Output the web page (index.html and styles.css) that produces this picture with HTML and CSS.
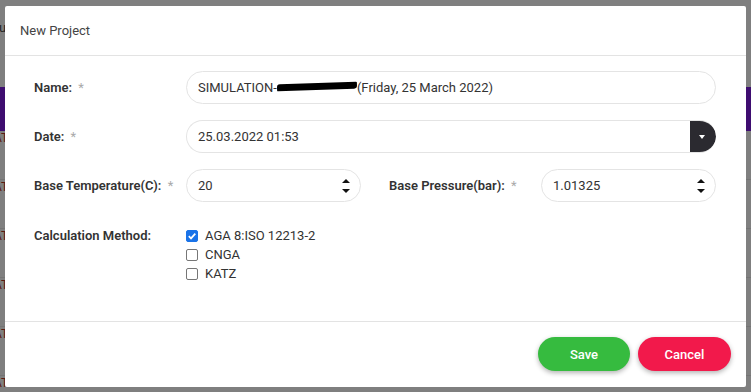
FILE: index.html
```
<!DOCTYPE html>
<html>
<head>
<meta charset="utf-8">
<title>New Project</title>
<link rel="stylesheet" href="styles.css">
</head>
<body>

<!-- page behind the dialog -->
<div class="page">
	<div class="page-top"><span>u</span></div>
	<div class="page-band"></div>
	<div class="page-row"><span>AT</span></div>
	<div class="page-row"><span>AT</span></div>
	<div class="page-row"><span>AT</span></div>
	<div class="page-row"><span>AT</span></div>
	<div class="page-row"><span>AT</span></div>
	<div class="page-row"><span>AT</span></div>
</div>

<!-- dialog -->
<div class="modal">
	<div class="modal-head">New Project</div>

	<div class="modal-body">
		<div class="row">
			<label class="lbl">Name: <i>*</i></label>
			<div class="field wide">
				<span>SIMULATION-<b class="redact"></b>(Friday, 25 March 2022)</span>
			</div>
		</div>

		<div class="row">
			<label class="lbl">Date: <i>*</i></label>
			<div class="field wide date">
				<span>25.03.2022 01:53</span>
				<div class="date-btn"><em></em></div>
			</div>
		</div>

		<div class="row">
			<label class="lbl">Base Temperature(C): <i>*</i></label>
			<div class="field num">
				<span>20</span>
				<div class="spin"><em class="up"></em><em class="down"></em></div>
			</div>
			<label class="lbl lbl2">Base Pressure(bar): <i>*</i></label>
			<div class="field num">
				<span>1.01325</span>
				<div class="spin"><em class="up"></em><em class="down"></em></div>
			</div>
		</div>

		<div class="row top">
			<label class="lbl">Calculation Method:</label>
			<div class="checks">
				<div class="check"><span class="box on"><svg width="10" height="10" viewBox="0 0 10 10"><path d="M1.8 5.2 L4 7.4 L8.3 2.6" fill="none" stroke="#fff" stroke-width="1.7"/></svg></span>AGA 8:ISO 12213-2</div>
				<div class="check"><span class="box"></span>CNGA</div>
				<div class="check"><span class="box"></span>KATZ</div>
			</div>
		</div>
	</div>

	<div class="modal-foot">
		<button class="btn save">Save</button>
		<button class="btn cancel">Cancel</button>
	</div>
</div>

</body>
</html>
```

FILE: styles.css
```
* {
	box-sizing: border-box;
}
html, body {
	height: 392px;
	overflow: hidden;
}
body {
	margin: 0;
	width: 751px;
	background: #7f7f7f;
	font-family: Roboto, "Liberation Sans", sans-serif;
	font-size: 13px;
	color: #333;
	position: relative;
}

/* dimmed page */
.page {
	height: 392px;
	overflow: hidden;
}
.page-top {
	height: 87px;
	padding: 20px 0 0 0;
	color: #222;
	font-size: 13px;
}
.page-top span { margin-left: -1px; }
.page-band {
	height: 44px;
	background: #3e0d70;
}
.page-row {
	height: 49px;
	border-bottom: 1px solid #747474;
	padding-top: 0;
	color: #5a1a10;
	font-size: 12px;
}
.page-row span { margin-left: -6px; }

/* dialog */
.modal {
	position: absolute;
	left: 5px;
	top: 6px;
	width: 741px;
	height: 381px;
	background: #fff;
	border-radius: 2px;
	display: flex;
	flex-direction: column;
}
.modal-head {
	height: 50px;
	padding: 17px 15px 0;
	border-bottom: 1px solid #e3e3e3;
	color: #444;
	font-size: 13px;
}
.modal-body {
	flex: 1;
	padding: 15px 30px 0 29px;
	display: flex;
	flex-direction: column;
	gap: 16px;
}
.row {
	display: flex;
	align-items: center;
}
.row.top {
	align-items: flex-start;
	padding-top: 10px;
}
.lbl {
	width: 152px;
	font-weight: 600;
	color: #333;
	font-size: 13px;
}
.lbl i {
	font-style: normal;
	font-weight: normal;
	color: #aaa;
	margin-left: 3px;
}
.lbl2 { margin-left: 28px; }

.field {
	height: 33px;
	border: 1.5px solid #e4e4e4;
	border-radius: 17px;
	display: flex;
	align-items: center;
	padding-left: 11px;
	color: #333;
	font-size: 13px;
}
.wide { width: 530px; }
.num { width: 175px; justify-content: space-between; padding-right: 10px; }
.redact {
	display: inline-block;
	width: 80px;
	height: 7px;
	background: #000;
	border-radius: 3px 1px 3px 1px;
	vertical-align: middle;
	margin-top: -4px;
	transform: rotate(-2deg);
}
.date {
	justify-content: space-between;
	padding-right: 0;
	overflow: hidden;
	border-right: none;
}
.date-btn {
	width: 26px;
	height: 33px;
	background: #2b2a30;
	border-radius: 0 17px 17px 0;
	display: flex;
	align-items: center;
	justify-content: center;
	padding-right: 2px;
}
.date-btn em {
	border-left: 3.5px solid transparent;
	border-right: 3.5px solid transparent;
	border-top: 4px solid #fff;
}
.spin {
	display: flex;
	flex-direction: column;
	gap: 6px;
}
.spin em {
	border-left: 4.5px solid transparent;
	border-right: 4.5px solid transparent;
}
.spin .up { border-bottom: 4.5px solid #111; }
.spin .down { border-top: 4.5px solid #111; }

.checks {
	display: flex;
	flex-direction: column;
	gap: 4px;
}
.check {
	display: flex;
	align-items: center;
	gap: 7px;
	color: #333;
	font-size: 13px;
	line-height: 15px;
}
.box {
	width: 12px;
	height: 12px;
	border: 1px solid #767676;
	border-radius: 2px;
	display: flex;
	align-items: center;
	justify-content: center;
}
.box.on {
	background: #1a73e8;
	border-color: #1a73e8;
}

.modal-foot {
	height: 66px;
	border-top: 1px solid #e3e3e3;
	display: flex;
	justify-content: flex-end;
	align-items: flex-start;
	gap: 8px;
	padding: 15px 15px 0 0;
}
.btn {
	width: 92px;
	height: 34px;
	border: none;
	border-radius: 17px;
	color: #fff;
	font-family: Roboto, "Liberation Sans", sans-serif;
	font-size: 13px;
	font-weight: 500;
	box-shadow: 0 2px 5px rgba(0, 0, 0, 0.3);
}
.save { background: #36bb3f; }
.cancel { background: #f2194b; width: 93px; }
```
